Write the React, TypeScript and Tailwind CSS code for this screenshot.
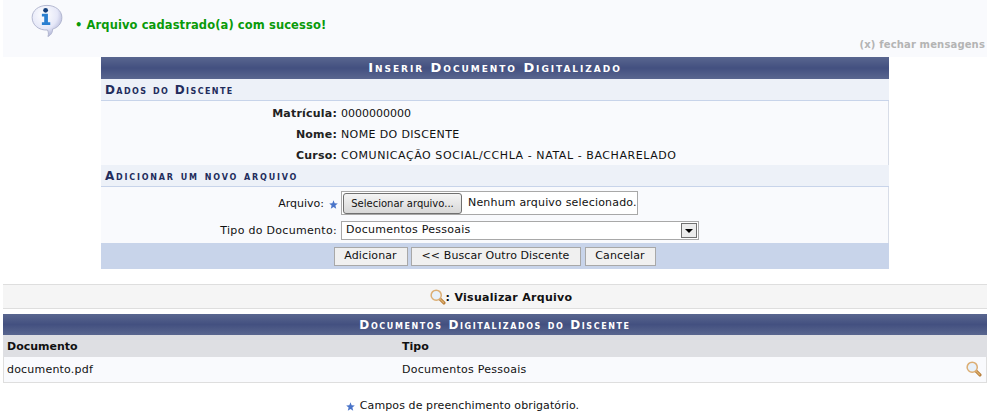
const font = "font-['DejaVu_Sans','Liberation_Sans',sans-serif]"

function Star() {
  return (
    <svg width="9" height="9" viewBox="0 0 10 10" className="inline-block">
      <path d="M5 0.3 L6.3 3.5 L9.8 3.8 L7.1 6 L8 9.6 L5 7.7 L2 9.6 L2.9 6 L0.2 3.8 L3.7 3.5 Z" fill="#4a74c9" />
    </svg>
  )
}

function Lupa({ size = 16 }: { size?: number }) {
  return (
    <svg width={size} height={size} viewBox="0 0 17 17" className="block">
      <path d="M10.5 10.5 L14.8 14.8" stroke="#b8803f" strokeWidth="3.4" strokeLinecap="round" />
      <path d="M11 11 L14.4 14.4" stroke="#e0b06c" strokeWidth="1.3" strokeLinecap="round" />
      <circle cx="6.6" cy="6.6" r="5.4" fill="#e8f1fa" stroke="#dcae74" strokeWidth="1.6" />
    </svg>
  )
}

function InfoIcon() {
  return (
    <svg width="32" height="33" viewBox="0 0 34 35.5" className="block">
      <defs>
        <radialGradient id="balao" cx="0.4" cy="0.3" r="0.75">
          <stop offset="0" stopColor="#ffffff" />
          <stop offset="0.6" stopColor="#e6e8f8" />
          <stop offset="1" stopColor="#a6aad0" />
        </radialGradient>
      </defs>
      <path
        d="M17 1.5 C26 1.5 33 7 33 14.5 C33 21 28.5 25.5 23 27 C23 30 22 33 18 35 C19 32 18.5 30 17.5 28 C8 28.5 1 22.5 1 14.5 C1 7 8 1.5 17 1.5 Z"
        fill="url(#balao)"
        stroke="#aeb2cc"
        strokeWidth="1"
      />
      <circle cx="15.5" cy="6.8" r="2.6" fill="#14407c" />
      <path d="M11.5 10.5 H18 V19.5 H20.5 V22.5 H11.5 V19.5 H14 V13.5 H11.5 Z" fill="#2a7fd0" />
    </svg>
  )
}

function Row({ label, value, tracking }: { label: string; value: string; tracking: string }) {
  return (
    <div className="flex h-[21px] items-center">
      <div className="w-[236px] text-right font-bold tracking-[0.2px] text-[#222]">{label}</div>
      <div className={`ml-1 ${tracking}`}>{value}</div>
    </div>
  )
}

export default function App() {
  const caption = 'flex items-center justify-center bg-[linear-gradient(#59668f,#435080_50%,#59668f)] font-bold text-white [font-variant:small-caps]'
  const section = 'flex h-[22px] items-center border-b border-[#c8d4ea] bg-[#edf1f8] pl-[4px] text-[12px] font-bold text-[#222c5c] [font-variant:small-caps]'
  const botao = 'flex h-[19px] items-center justify-center border border-[#a8a8a8] bg-[#f0f0f0] text-[11px] tracking-[0.1px] text-[#111]'

  return (
    <div className={`${font} h-[415px] w-[990px] overflow-hidden bg-white text-[11px] text-[#111]`}>
      {/* Mensagens */}
      <div className="ml-[3px] h-[57px] w-[984px] bg-[#f9fafd]">
        <div className="flex items-start pl-[28px] pt-[4px]">
          <InfoIcon />
          <div className="ml-[12px] mt-[13px] text-[11.5px] font-bold tracking-[0.1px] text-[#0a9a0a]">• Arquivo cadastrado(a) com sucesso!</div>
        </div>
        <div className="mr-[2px] text-right text-[10px] font-bold tracking-[0.15px] text-[#b4b4b4]">(x) fechar mensagens</div>
      </div>

      {/* Formulario */}
      <div className="ml-[101px] w-[788px]">
        <div className={`${caption} h-[22px] text-[13px] tracking-[1.95px]`}>Inserir Documento Digitalizado</div>
        <div className={`${section} tracking-[1.4px]`}>Dados do Discente</div>
        <div className="h-[64px] border-r border-[#d8dde8] bg-[#f9fafd] pt-[3px]">
          <Row label="Matrícula:" value="0000000000" tracking="tracking-normal" />
          <Row label="Nome:" value="NOME DO DISCENTE" tracking="tracking-[0.37px]" />
          <Row label="Curso:" value="COMUNICAÇÃO SOCIAL/CCHLA - NATAL - BACHARELADO" tracking="tracking-[0.57px]" />
        </div>
        <div className={`${section} tracking-[1.8px]`}>Adicionar um novo arquivo</div>
        <div className="h-[56px] border-r border-[#d8dde8] bg-[#f9fafd]">
          <div className="flex h-[33px] items-start">
            <div className="mt-[9px] flex w-[237px] items-center justify-end gap-[5px]">
              <span>Arquivo:</span>
              <Star />
            </div>
            <div className="ml-[3px] mt-[4px] flex h-[24px] w-[297px] items-center border border-[#a8a8a8] bg-white pl-[1px]">
              <button className="h-[21px] w-[119px] rounded-[3px] border border-[#707070] bg-[linear-gradient(#f4f4f4,#d8d8d8)] text-[10px] text-[#111]">
                Selecionar arquivo...
              </button>
              <span className="ml-[6px] whitespace-nowrap tracking-[0.18px]">Nenhum arquivo selecionado.</span>
            </div>
          </div>
          <div className="flex h-[22px] items-center">
            <div className="w-[236px] pt-[1px] text-right tracking-[0.3px]">Tipo do Documento:</div>
            <div className="ml-1 mt-[-1px] flex h-[19px] w-[358px] items-center justify-between border border-[#a8a8a8] bg-white pl-[4px] pr-[1px]">
              <span className="tracking-[0.25px]">Documentos Pessoais</span>
              <div className="flex h-[15px] w-[16px] items-center justify-center border border-[#707070] bg-[#ececec]">
                <div className="h-0 w-0 border-x-[4px] border-t-[4px] border-x-transparent border-t-black" />
              </div>
            </div>
          </div>
        </div>
        <div className="flex h-[26px] items-center justify-center gap-[3px] bg-[#c8d4ea] pr-[1px] pt-[1px]">
          <button className={`${botao} w-[74px]`}>Adicionar</button>
          <button className={`${botao} w-[170px]`}>{'<< Buscar Outro Discente'}</button>
          <button className={`${botao} ml-[1px] w-[71px]`}>Cancelar</button>
        </div>
      </div>

      {/* Legenda */}
      <div className="ml-[3px] mt-[15px] flex h-[25px] w-[984px] items-center justify-center border-y border-[#dedede] bg-[#f5f5f5] pl-[12px] font-bold text-[#111]">
        <Lupa />
        <span className="pt-[3px] tracking-[0.3px]">: Visualizar Arquivo</span>
      </div>

      {/* Documentos */}
      <div className="ml-[3px] mt-[5px] w-[984px]">
        <div className={`${caption} h-[21px] text-[12px] tracking-[1.6px]`}>Documentos Digitalizados do Discente</div>
        <div className="flex h-[22px] items-center bg-[#dedfe3] pt-[3px] font-bold text-[#111]">
          <div className="w-[399px] pl-[4px]">Documento</div>
          <div>Tipo</div>
        </div>
        <div className="flex h-[26px] items-center border-x border-b border-[#dedede] bg-[#f9fafd]">
          <div className="w-[398px] pl-[3px] pt-[2px] tracking-[0.2px]">documento.pdf</div>
          <div className="flex-1 pt-[2px] tracking-[0.25px]">Documentos Pessoais</div>
          <div className="mb-[2px] mr-[4px]">
            <Lupa />
          </div>
        </div>
      </div>

      <div className="mt-[15px] flex items-center justify-center gap-[5px] pr-[65px] text-[11px] tracking-[0.1px]">
        <Star />
        <span>Campos de preenchimento obrigatório.</span>
      </div>
    </div>
  )
}
